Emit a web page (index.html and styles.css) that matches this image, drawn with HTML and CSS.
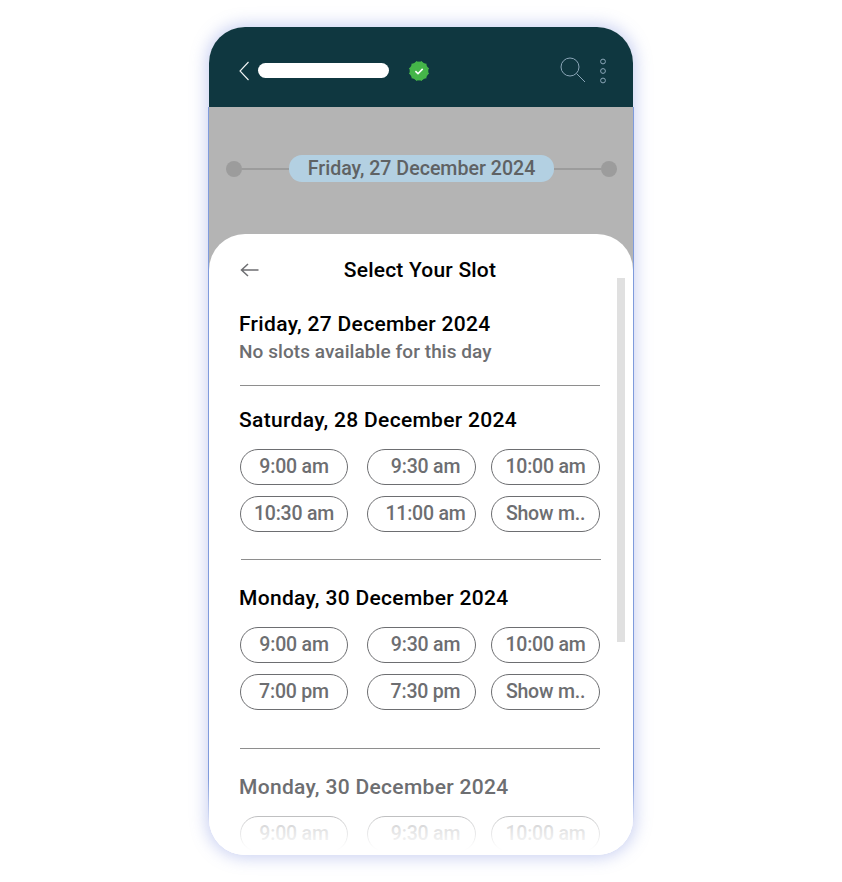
FILE: index.html
```html
<!DOCTYPE html>
<html lang="en">
<head>
<meta charset="utf-8">
<title>Select Your Slot</title>
<link rel="stylesheet" href="styles.css">
</head>
<body>
<div class="phone">
  <header class="topbar">
    <svg class="chev" width="11" height="20" viewBox="0 0 11 20"><path d="M9.5 1 1 10l8.5 9" fill="none" stroke="#f2f5f6" stroke-width="1.1"/></svg>
    <span class="name"></span>
    <svg class="badge" width="22" height="22" viewBox="0 0 22 22">
      <g fill="#45b549">
        <circle cx="11" cy="11" r="9.4"/>
        <rect x="3.6" y="3.6" width="14.8" height="14.8"/>
        <rect x="3.6" y="3.6" width="14.8" height="14.8" transform="rotate(30 11 11)"/>
        <rect x="3.6" y="3.6" width="14.8" height="14.8" transform="rotate(60 11 11)"/>
      </g>
      <path d="M7.4 11.2l2.6 2.5 4.7-4.8" fill="none" stroke="#fff" stroke-width="1.6"/>
    </svg>
    <span class="spacer"></span>
    <svg class="search" width="28" height="28" viewBox="0 0 28 28"><circle cx="11" cy="10" r="9" fill="none" stroke="#8ba6b8" stroke-width="1"/><path d="M17.5 16.5 26 25" stroke="#8ba6b8" stroke-width="1"/></svg>
    <svg class="dots" width="8" height="26" viewBox="0 0 8 26"><g fill="none" stroke="#8ba6b8" stroke-width="1"><circle cx="4" cy="3.5" r="2.4"/><circle cx="4" cy="13" r="2.4"/><circle cx="4" cy="22.5" r="2.4"/></g></svg>
  </header>
  <div class="band">
    <span class="dot"></span><span class="line"></span>
    <span class="date">Friday, 27 December 2024</span>
    <span class="line"></span><span class="dot"></span>
  </div>
  <main class="sheet">
    <div class="head">
      <svg class="back" width="20" height="14" viewBox="0 0 20 14"><path d="M18.5 7H1.5M8 1 1.5 7 8 13" fill="none" stroke="#6d6e71" stroke-width="1.5"/></svg>
      <h1>Select Your Slot</h1>
    </div>
    <section class="first">
      <h2>Friday, 27 December 2024</h2>
      <p>No slots available for this day</p>
    </section>
    <hr class="rule-a">
    <section>
      <h2>Saturday, 28 December 2024</h2>
      <div class="slots">
        <button>9:00 am</button><button>9:30 am</button><button>10:00 am</button>
        <button>10:30 am</button><button>11:00 am</button><button>Show m..</button>
      </div>
    </section>
    <hr class="rule-b">
    <section>
      <h2>Monday, 30 December 2024</h2>
      <div class="slots">
        <button>9:00 am</button><button>9:30 am</button><button>10:00 am</button>
        <button>7:00 pm</button><button>7:30 pm</button><button>Show m..</button>
      </div>
    </section>
    <hr class="rule-c">
    <section>
      <h2 class="muted">Monday, 30 December 2024</h2>
      <div class="slots">
        <button>9:00 am</button><button>9:30 am</button><button>10:00 am</button>
      </div>
    </section>
    <div class="scrollbar"></div>
    <div class="fade"></div>
  </main>
</div>
</body>
</html>
```
FILE: styles.css
```css
* { box-sizing: border-box; }
html, body { margin: 0; height: 100%; background: #fff; }
body { padding: 27px 0 0 209px; font-family: Roboto, "Liberation Sans", sans-serif; overflow: hidden; }

.phone {
  width: 424px;
  height: 828px;
  display: flex;
  flex-direction: column;
  border-radius: 36px;
  box-shadow: 0 0 16px 3px rgba(110, 130, 220, .36);
}

.topbar {
  height: 80px;
  flex: none;
  background: #0f3740;
  border-radius: 36px 36px 0 0;
  display: flex;
  align-items: center;
  padding: 0 26px 0 30px;
}
.chev { margin-right: 8px; margin-top: 7px; }
.name { width: 131px; height: 15px; background: #fff; border-radius: 8px; margin-top: 7px; }
.badge { margin-top: 7px; margin-left: 19px; }
.spacer { flex: 1; }
.search { margin-top: 7px; margin-right: 12px; }
.dots { margin-top: 7px; }

.band {
  height: 167px;
  flex: none;
  display: flex;
  align-items: flex-start;
  padding: 48px 16px 0 17px;
  background: #b4b4b4;
  box-shadow: -1px 0 #7f9bdc, 1px 0 #7f9bdc;
}
.dot { width: 16px; height: 16px; border-radius: 50%; background: #9c9c9c; flex: none; margin-top: 6px; }
.line { flex: 1; height: 2px; background: #9c9c9c; margin-top: 13px; }
.date {
  flex: none;
  width: 265px;
  height: 27px;
  line-height: 27px;
  border-radius: 13px;
  background: #b3d0e2;
  color: #5f6264;
  text-align: center;
  font-size: 19.6px;
  font-weight: 500;
  letter-spacing: 0;
}

.sheet {
  flex: 1;
  min-height: 0;
  margin-top: -40px;
  position: relative;
  background: #fff;
  border-radius: 36px;
  padding: 18px 33px 0 31px;
}
.sheet::before,
.sheet::after {
  content: "";
  position: absolute;
  top: 30px;
  bottom: 32px;
  width: 1px;
  background: linear-gradient(to bottom, #7f9bdc 92%, rgba(127, 155, 220, 0));
}
.sheet::before { left: -1px; }
.sheet::after { right: -1px; }
.head { height: 36px; display: flex; align-items: center; justify-content: center; position: relative; }
.back { position: absolute; left: 0; top: 11px; }
h1 { margin: 0; font-size: 21px; font-weight: 500; color: #000; letter-spacing: .2px; }
.first { margin-top: 24px; }
h2 { margin: 0 0 0 -1px; font-size: 21px; line-height: 24px; font-weight: 500; color: #000; white-space: nowrap; letter-spacing: .32px; }
h2.muted { color: #6d6e71; }
p { margin: 4px 0 0 -1px; font-size: 19px; line-height: 24px; font-weight: 500; color: #6d6e71; white-space: nowrap; letter-spacing: .07px; }

hr { border: 0; height: 1px; background: #8e8e8e; margin: 0; }
.rule-a { margin: 21px 0 22px; }
.rule-b { margin: 27px -1px 26px 1px; }
.rule-c { margin: 38px 0 26px; }

.slots {
  display: grid;
  grid-template-columns: 127px 124px 109px;
  grid-auto-rows: 36px;
  row-gap: 11px;
  margin-top: 17px;
}
button {
  width: 109px;
  height: 36px;
  padding: 0 0 2px;
  background: #fff;
  border: 1px solid #6d6e71;
  border-radius: 18px;
  color: #6d6e71;
  font: 500 19.5px Roboto, "Liberation Sans", sans-serif;
  letter-spacing: -.2px;
  white-space: nowrap;
}
button:nth-child(3n+1) { width: 108px; }
button:nth-child(3n+2) { padding-left: 8px; }

.scrollbar {
  position: absolute;
  left: 408px;
  top: 44px;
  width: 8px;
  height: 364px;
  background: #e0e0e0;
}
.fade {
  position: absolute;
  left: 0;
  right: 0;
  bottom: 0;
  height: 58px;
  border-radius: 0 0 36px 36px;
  background: linear-gradient(to bottom, rgba(255,255,255,.2), rgba(255,255,255,.8) 55%, #fff 92%);
}
```
